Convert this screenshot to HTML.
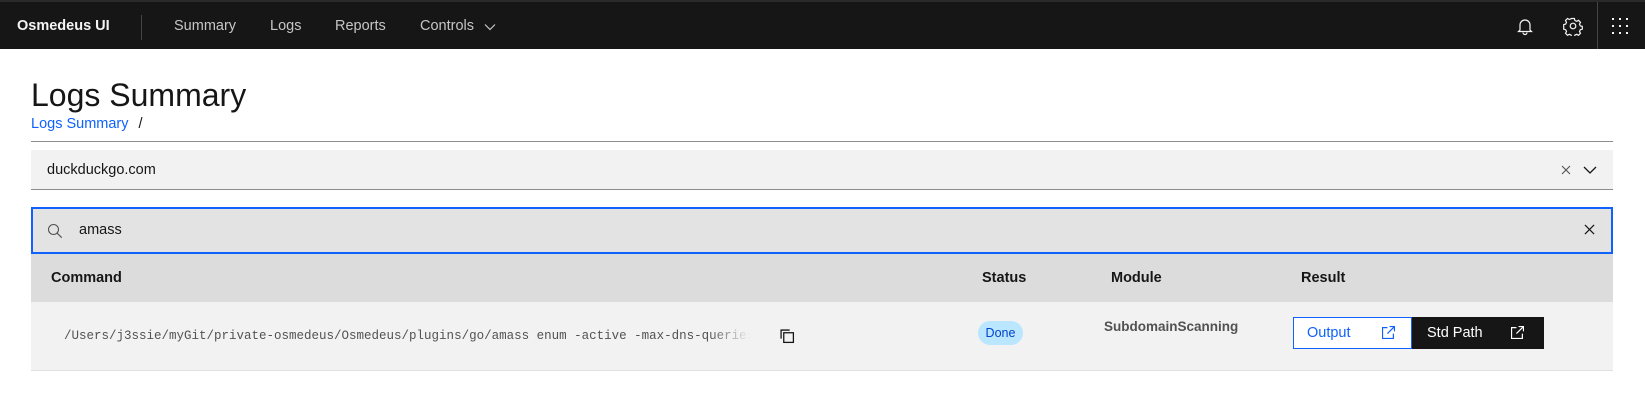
<!DOCTYPE html>
<html><head><meta charset="utf-8"><style>
*{box-sizing:border-box;margin:0;padding:0}
body{width:1645px;height:414px;background:#fff;font-family:"Liberation Sans",sans-serif;position:relative;overflow:hidden;color:#161616}
.nav{position:absolute;left:0;top:0;width:1645px;height:49px;background:#161616;border-top:2px solid #2a2a2a}
.nav .brand{position:absolute;left:17px;top:16px;color:#f4f4f4;font-weight:bold;font-size:14.5px}
.nav .sep{position:absolute;left:141px;top:13px;width:1px;height:25px;background:#444}
.nav .lnk{position:absolute;top:16px;color:#c6c6c6;font-size:14.5px}
.abs{position:absolute}
</style></head><body>
<div class="nav">
<div class="brand">Osmedeus UI</div><div class="sep"></div>
<div class="lnk" style="left:174px">Summary</div>
<div class="lnk" style="left:270px">Logs</div>
<div class="lnk" style="left:335px">Reports</div>
<div class="lnk" style="left:420px">Controls</div>
<svg class="abs" style="left:484px;top:21px" width="12" height="8" viewBox="0 0 12 8"><path d="M1 1.5l5 5 5-5" stroke="#c6c6c6" fill="none" stroke-width="1.2"/></svg>
<svg class="abs" style="left:1515px;top:14px" width="20" height="20" viewBox="0 0 20 20" fill="none" stroke="#f4f4f4" stroke-width="1.2"><path d="M5 14V9a5 5 0 0110 0v5l1.5 1.5h-13z"/><path d="M8 16.5a2 2 0 004 0"/></svg>
<svg class="abs" style="left:1563px;top:14px" width="20" height="20" viewBox="0 0 20 20" fill="none" stroke="#f4f4f4" stroke-width="1.2"><circle cx="10" cy="10" r="2.8"/><path d="M8.6 2.5h2.8l.5 2 1.8.8 1.8-1 2 2-1 1.8.8 1.8 2 .5v2.8l-2 .5-.8 1.8 1 1.8-2 2-1.8-1-1.8.8-.5 2H8.6l-.5-2-1.8-.8-1.8 1-2-2 1-1.8-.8-1.8-2-.5V8.6l2-.5.8-1.8-1-1.8 2-2 1.8 1 1.8-.8z"/></svg>
<div class="abs" style="left:1597px;top:0;width:1px;height:47px;background:#444"></div>
<svg class="abs" style="left:1612px;top:15px" width="18" height="18" viewBox="0 0 18 18" fill="#f4f4f4"><rect x="0" y="1" width="2" height="2"/><rect x="7" y="1" width="2" height="2"/><rect x="14" y="1" width="2" height="2"/><rect x="0" y="8" width="2" height="2"/><rect x="7" y="8" width="2" height="2"/><rect x="14" y="8" width="2" height="2"/><rect x="0" y="15" width="2" height="2"/><rect x="7" y="15" width="2" height="2"/><rect x="14" y="15" width="2" height="2"/></svg>
</div>
<div class="abs" style="left:31px;top:77px;font-size:32px;color:#161616">Logs Summary</div>
<div class="abs" style="left:31px;top:116px;font-size:14.5px;color:#0f62fe">Logs Summary <span style="color:#161616;margin-left:6px">/</span></div>
<div class="abs" style="left:31px;top:141px;width:1582px;height:1px;background:#8d8d8d"></div>
<div class="abs" style="left:31px;top:150px;width:1582px;height:40px;background:#f2f2f2;border-bottom:1px solid #8d8d8d"></div>
<div class="abs" style="left:47px;top:162px;font-size:14.5px">duckduckgo.com</div>
<svg class="abs" style="left:1560px;top:164px" width="12" height="12" viewBox="0 0 12 12" stroke="#525252" stroke-width="1.1"><path d="M2 2l8 8M10 2l-8 8"/></svg>
<svg class="abs" style="left:1583px;top:166px" width="14" height="8" viewBox="0 0 14 8" fill="none" stroke="#161616" stroke-width="1.3"><path d="M1 1l6 6 6-6"/></svg>
<div class="abs" style="left:31px;top:207px;width:1582px;height:47px;background:#e3e3e3;border:2px solid #0f62fe"></div>
<svg class="abs" style="left:47px;top:223px" width="16" height="16" viewBox="0 0 16 16" fill="none" stroke="#525252" stroke-width="1.1"><circle cx="6.5" cy="6.5" r="5"/><path d="M10.2 10.2l4.5 4.5"/></svg>
<div class="abs" style="left:79px;top:222px;font-size:14.5px">amass</div>
<svg class="abs" style="left:1584px;top:224px" width="11" height="11" viewBox="0 0 12 12" stroke="#161616" stroke-width="1.3"><path d="M1 1l10 10M11 1L1 11"/></svg>
<div class="abs" style="left:31px;top:254px;width:1582px;height:48px;background:#dcdcdc"></div>
<div class="abs" style="left:51px;top:270px;font-size:14.5px;font-weight:bold">Command</div>
<div class="abs" style="left:982px;top:270px;font-size:14.5px;font-weight:bold">Status</div>
<div class="abs" style="left:1111px;top:270px;font-size:14.5px;font-weight:bold">Module</div>
<div class="abs" style="left:1301px;top:270px;font-size:14.5px;font-weight:bold">Result</div>
<div class="abs" style="left:31px;top:302px;width:1582px;height:69px;background:#f2f2f2;border-bottom:1px solid #e0e0e0"></div>
<div class="abs" style="left:64px;top:329px;width:686px;overflow:hidden;white-space:nowrap;font-family:'Liberation Mono',monospace;font-size:12.5px;color:#525252;-webkit-mask-image:linear-gradient(to right,#000 94%,transparent)">/Users/j3ssie/myGit/private-osmedeus/Osmedeus/plugins/go/amass enum -active -max-dns-queries 2000</div>
<svg class="abs" style="left:780px;top:329px" width="15" height="15" viewBox="0 0 14 14" fill="none" stroke="#161616" stroke-width="1.2"><path d="M1 9V1h8"/><rect x="3.5" y="3.5" width="9" height="9"/></svg>
<div class="abs" style="left:978px;top:321px;width:45px;height:24px;border-radius:12px;background:#bae6ff;color:#0043ce;font-size:12.5px;line-height:24px;text-align:center">Done</div>
<div class="abs" style="left:1104px;top:319px;font-size:13.5px;font-weight:bold;color:#525252">SubdomainScanning</div>
<div class="abs" style="left:1293px;top:317px;width:119px;height:32px;border:1px solid #0f62fe;background:#fff;color:#0f62fe;font-size:14.5px;line-height:31px;padding-left:13px">Output</div>
<svg class="abs" style="left:1382px;top:326px" width="13" height="13" viewBox="0 0 12 12" fill="none" stroke="#0f62fe" stroke-width="1.1"><path d="M5 1.5H.5v10h10V7"/><path d="M7 .5h4.5V5M11.5.5 5 7"/></svg>
<div class="abs" style="left:1412px;top:317px;width:132px;height:32px;background:#161616;color:#fff;font-size:14.5px;line-height:33px;padding-left:15px">Std Path</div>
<svg class="abs" style="left:1511px;top:326px" width="13" height="13" viewBox="0 0 12 12" fill="none" stroke="#fff" stroke-width="1.1"><path d="M5 1.5H.5v10h10V7"/><path d="M7 .5h4.5V5M11.5.5 5 7"/></svg>
</body></html>
